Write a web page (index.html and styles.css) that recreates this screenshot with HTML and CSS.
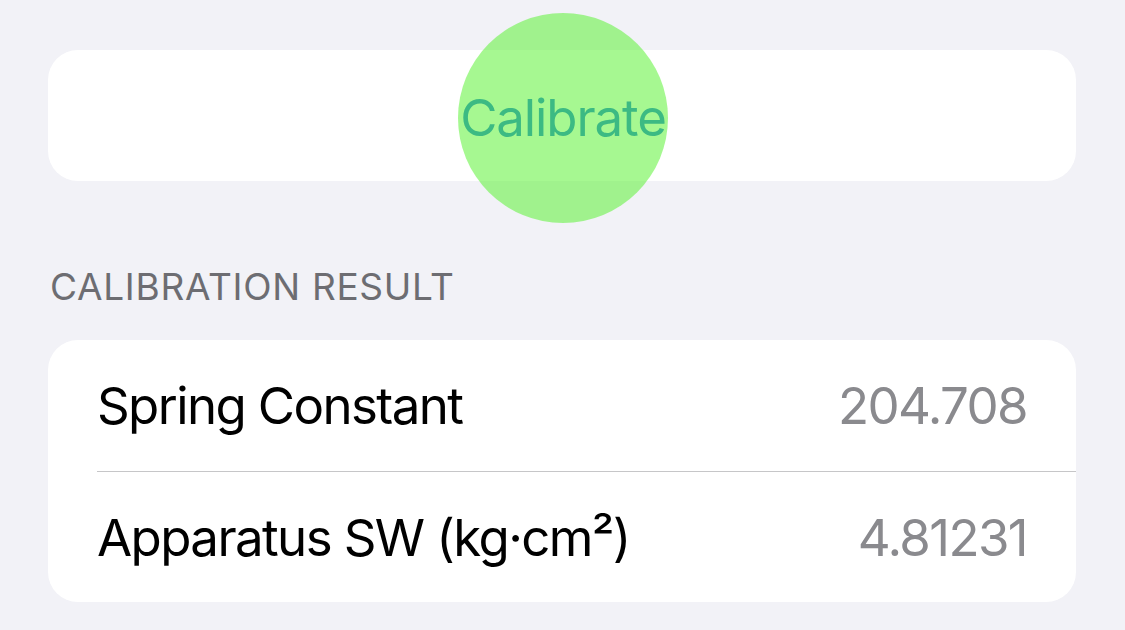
FILE: index.html
```html
<!DOCTYPE html>
<html lang="en">
<head>
    <meta charset="UTF-8">
    <meta name="viewport" content="width=device-width, initial-scale=1.0">
    <title>Calibration</title>
    <link rel="stylesheet" href="styles.css">
</head>
<body>
    <div class="page">
        <!-- Tombol kalibrasi -->
        <div class="card button-card">
            <button class="calibrate">Calibrate</button>
            <div class="touch"></div>
        </div>

        <h2 class="section-title">CALIBRATION RESULT</h2>
        <div class="card">
            <div class="row">
                <span class="label">Spring Constant</span>
                <span class="value">204.708</span>
            </div>
            <div class="row">
                <span class="label">Apparatus SW (kg·cm²)</span>
                <span class="value">4.81231</span>
            </div>
        </div>
    </div>
</body>
</html>
```

FILE: styles.css
```css
:root {
    --background-color: #f2f2f7;
    --card-background: #ffffff;
    --text-color: #000000;
    --secondary-text: #8a8a8e;
    --header-text: #6d6d72;
    --tint-color: #1a78e0;
    --separator: #c6c6c8;
}

* {
    margin: 0;
    padding: 0;
    box-sizing: border-box;
}

body {
    font-family: Inter, 'Liberation Sans', sans-serif;
    background-color: var(--background-color);
    color: var(--text-color);
    width: 1125px;
    height: 630px;
    overflow: hidden;
}

.page {
    padding: 50px 49px 0 48px;
}

.card {
    background: var(--card-background);
    border-radius: 30px;
    overflow: hidden;
}

.button-card {
    position: relative;
    overflow: visible;
    height: 131px;
    display: flex;
    align-items: center;
    justify-content: center;
}

.calibrate {
    background: none;
    border: none;
    font-family: inherit;
    font-size: 51px;
    letter-spacing: -1.1px;
    color: var(--tint-color);
    padding-top: 4px;
    margin-left: 2px;
}

/* indikator sentuhan */
.touch {
    position: absolute;
    left: 410px;
    top: -37px;
    width: 210px;
    height: 210px;
    border-radius: 50%;
    background: rgba(90, 242, 51, 0.54);
}

.section-title {
    font-weight: 400;
    font-size: 37px;
    color: var(--header-text);
    letter-spacing: 0.7px;
    margin-top: 84px;
    margin-left: 2px;
    line-height: 44px;
    margin-bottom: 31px;
}

.row {
    height: 131px;
    margin-left: 49px;
    padding-right: 49px;
    display: flex;
    align-items: center;
    justify-content: space-between;
    font-size: 51px;
    letter-spacing: -1.6px;
}

.row + .row {
    border-top: 1px solid var(--separator);
}

.value {
    color: var(--secondary-text);
}
```
